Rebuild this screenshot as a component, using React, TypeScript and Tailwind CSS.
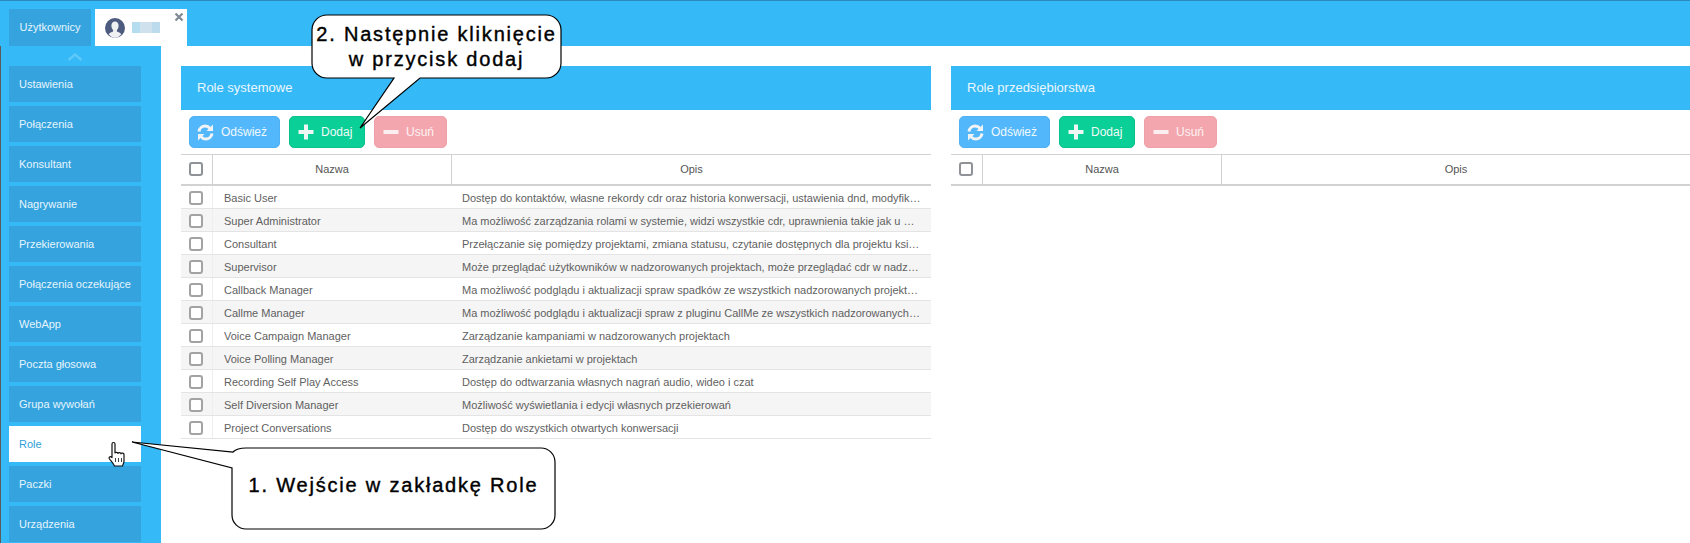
import React from "react";

const menu = ["Ustawienia","Połączenia","Konsultant","Nagrywanie","Przekierowania","Połączenia oczekujące","WebApp","Poczta głosowa","Grupa wywołań","Role","Paczki","Urządzenia"];

const rows: [string,string][] = [
  ["Basic User","Dostęp do kontaktów, własne rekordy cdr oraz historia konwersacji, ustawienia dnd, modyfikacja własnego profilu użytkownika oraz dostęp do aplikacji"],
  ["Super Administrator","Ma możliwość zarządzania rolami w systemie, widzi wszystkie cdr, uprawnienia takie jak u wszystkich pozostałych ról w systemie"],
  ["Consultant","Przełączanie się pomiędzy projektami, zmiana statusu, czytanie dostępnych dla projektu książek adresowych oraz kontaktów"],
  ["Supervisor","Może przeglądać użytkowników w nadzorowanych projektach, może przeglądać cdr w nadzorowanych projektach oraz statystyki"],
  ["Callback Manager","Ma możliwość podglądu i aktualizacji spraw spadków ze wszystkich nadzorowanych projektów oraz ich obsługi w systemie"],
  ["Callme Manager","Ma możliwość podglądu i aktualizacji spraw z pluginu CallMe ze wszystkich nadzorowanych projektów oraz ich obsługi"],
  ["Voice Campaign Manager","Zarządzanie kampaniami w nadzorowanych projektach"],
  ["Voice Polling Manager","Zarządzanie ankietami w projektach"],
  ["Recording Self Play Access","Dostęp do odtwarzania własnych nagrań audio, wideo i czat"],
  ["Self Diversion Manager","Możliwość wyświetlania i edycji własnych przekierowań"],
  ["Project Conversations","Dostęp do wszystkich otwartych konwersacji"],
];

const Check = ({ header = false }: { header?: boolean }) => (
  <span className={`block w-[14px] h-[14px] rounded-[3px] border-2 bg-white ${header ? "border-[#8f9296]" : "border-[#a3a3a3]"}`} />
);

const Refresh = () => (
  <svg width="17" height="17" viewBox="0 0 17 17" fill="none" className="shrink-0">
    <path d="M2 7.500C2.400 4.300 5 2 8.200 2c2.100 0 3.700.9 4.900 2.400" stroke="#f1f3f5" strokeWidth="3" />
    <path d="M16 .5v6.500H9.500z" fill="#f1f3f5" />
    <path d="M15 9.500c-.4 3.200-3 5.500-6.200 5.500-2.100 0-3.700-.9-4.900-2.400" stroke="#f1f3f5" strokeWidth="3" />
    <path d="M1 16.500V10h6.500z" fill="#f1f3f5" />
  </svg>
);

const Plus = () => (
  <svg width="16" height="16" viewBox="0 0 16 16" className="shrink-0">
    <path d="M6 0.500h4V6h5.500v4H10v5.500H6V10H0.500V6H6z" fill="#eef6f3" />
  </svg>
);

const Minus = () => (
  <svg width="16" height="16" viewBox="0 0 16 16" className="shrink-0">
    <rect x="0.500" y="6" width="15" height="4" rx="0.500" fill="#fbeef0" />
  </svg>
);

function Panel({ title, data, className }: { title: string; data: [string,string][]; className: string }) {
  return (
    <section className={className}>
      <div className="h-[44px] bg-[#36b9f7] flex items-center pl-[16px] text-[13px] text-[#eaf7fe]">{title}</div>
      <div className="flex pt-[6px] pl-[8px] h-[44px]">
        <button className="w-[91px] h-[32px] rounded-[5px] bg-[#52b7fb] border border-[#4fb0f2] text-[#f1f8fe] text-[12px] flex items-center pl-[7px] gap-[7px]"><Refresh />Odśwież</button>
        <button className="ml-[9px] w-[76px] h-[32px] rounded-[5px] bg-[#0acf97] border border-[#0ac08c] text-[#f1fbf8] text-[12px] flex items-center pl-[8px] gap-[7px]"><Plus />Dodaj</button>
        <button className="ml-[9px] w-[73px] h-[32px] rounded-[5px] bg-[#f3a6ae] border border-[#f0a0a9] text-[#fdf3f4] text-[12px] flex items-center pl-[8px] gap-[7px]"><Minus />Usuń</button>
      </div>
      <div className="flex h-[32px] border-t border-b-[2px] border-[#d2d2d2] text-[11px] text-[#555555] box-border">
        <div className="w-[32px] shrink-0 border-r border-[#d2d2d2] flex items-center pl-[8px] pb-[2px]"><Check header /></div>
        <div className="w-[239px] shrink-0 border-r border-[#d2d2d2] flex items-center justify-center">Nazwa</div>
        <div className="flex-1 flex items-center justify-center">Opis</div>
      </div>
      {data.map((r, i) => (
        <div key={r[0]} className={`flex h-[23px] border-b border-[#e4e4e4] text-[11px] text-[#5f5f5f] box-border ${i % 2 ? "bg-[#f5f5f5]" : "bg-white"}`}>
          <div className="w-[32px] shrink-0 border-r border-[#eeeeee] flex items-center pl-[8px] pt-[1px]"><Check /></div>
          <div className="w-[239px] shrink-0 pl-[11px] leading-[24px]">{r[0]}</div>
          <div className="flex-1 min-w-0 pl-[10px] pr-[9px] leading-[24px] truncate">{r[1]}</div>
        </div>
      ))}
    </section>
  );
}

export default function App() {
  return (
    <div className="relative w-[1690px] h-[543px] overflow-hidden bg-white font-['Liberation_Sans',Arial,sans-serif]">
      <header className="h-[46px] bg-[#36b9f7] border-t border-[#2b89bd] pt-[8px] pl-[9px] flex box-border">
        <div className="w-[82px] h-[37px] bg-[#35a3de] text-[#e6f5fd] text-[11px] flex items-center justify-center">Użytkownicy</div>
        <div className="relative ml-[4px] w-[92px] h-[37px] bg-white flex items-center pl-[10px]">
          <svg width="20" height="20" viewBox="0 0 20 20" className="shrink-0">
            <circle cx="10" cy="10" r="10" fill="#4d5b7f" />
            <path d="M10 3.500c2.400 0 3.600 1.900 3.600 4.200 0 1.800-.8 3.300-1.700 4.200v1.600c1.500.6 3.300 1.400 4.500 2.800A10 10 0 0 1 10 20a10 10 0 0 1-6.400-3.700c1.200-1.400 3-2.200 4.500-2.800v-1.600c-.9-.9-1.700-2.400-1.700-4.200 0-2.300 1.200-4.200 3.600-4.200z" fill="#eef0f2" />
          </svg>
          <div className="ml-[7px] w-[28px] h-[11px] flex">
            <span className="w-[8px] bg-[#b5dcef]" /><span className="w-[12px] bg-[#cfe1ec]" /><span className="w-[8px] bg-[#bcdcee]" />
          </div>
          <svg width="10" height="10" viewBox="0 0 10 10" className="absolute top-[3px] right-[3px]">
            <path d="M1.500 1.500l7 7M8.500 1.500l-7 7" stroke="#7f8a96" strokeWidth="2.200" />
          </svg>
        </div>
      </header>
      <div className="flex h-[497px]">
        <aside className="w-[161px] shrink-0 bg-[#36b9f7] border-l border-[#5c5c5c] pl-[8px] overflow-hidden box-border">
          <div className="h-[20px] flex justify-center w-[132px] pt-[7px]">
            <svg width="16" height="8" viewBox="0 0 16 8"><path d="M1.500 7L8 1.500 14.500 7" fill="none" stroke="#5ec8f9" strokeWidth="2.500" /></svg>
          </div>
          <nav className="flex flex-col gap-[4px] w-[132px]">
            {menu.map((m) => (
              <div key={m} className={`h-[36px] shrink-0 flex items-center pl-[10px] text-[11px] whitespace-nowrap ${m === "Role" ? "bg-white text-[#2f9fd8]" : "bg-[#35a3de] text-[#e6f5fd]"}`}>{m}</div>
            ))}
          </nav>
        </aside>
        <main className="flex-1 min-w-0 pt-[20px] pl-[20px] flex gap-[20px]">
          <Panel className="w-[750px] shrink-0" title="Role systemowe" data={rows} />
          <Panel className="flex-1 min-w-0" title="Role przedsiębiorstwa" data={[]} />
        </main>
      </div>

      <svg width="40" height="40" viewBox="0 0 40 40" className="absolute left-[100px] top-[437px]">
        <path d="M12 7c0-2 3-2 3 0v9c0-1 3-1 3 .5 0-1.200 3-1.200 3 .3 0-1 3-1 3 .7v6.500c0 2-1 3-1.500 5H14.500c-1-2.500-3-4.500-5-7-1.300-1.700.7-3.300 2.500-1.500z" fill="#fff" stroke="#111" strokeWidth="1.200" strokeLinejoin="round" />
        <path d="M15.500 21v4M18.500 21v4M21.500 21v4" stroke="#111" strokeWidth="0.800" />
      </svg>

      <svg width="1690" height="543" viewBox="0 0 1690 543" className="absolute left-0 top-0 pointer-events-none">
        <path d="M327 15H546a15 15 0 0 1 15 15V63a15 15 0 0 1-15 15H420L360 128 394 78H327a15 15 0 0 1-15-15V30a15 15 0 0 1 15-15z" fill="#fff" stroke="#000" strokeWidth="1.200" />
        <path d="M246 448H541a14 14 0 0 1 14 14V515a14 14 0 0 1-14 14H246a14 14 0 0 1-14-14V468L132 442 233 452q4-4 13-4z" fill="#fff" stroke="#000" strokeWidth="1.200" />
      </svg>

      <div className="absolute left-[312px] top-[15px] w-[249px] h-[63px] flex flex-col items-center justify-center text-[20px] leading-[25px] tracking-[1.800px] whitespace-nowrap text-black [-webkit-text-stroke:0.4px_black]">
        <span>2. Następnie kliknięcie</span>
        <span>w przycisk dodaj</span>
      </div>
      <div className="absolute left-[232px] top-[448px] w-[323px] h-[81px] flex items-center justify-center text-[20px] tracking-[1.800px] whitespace-nowrap text-black pb-[8px] [-webkit-text-stroke:0.4px_black]">
        1. Wejście w zakładkę Role
      </div>
    </div>
  );
}
